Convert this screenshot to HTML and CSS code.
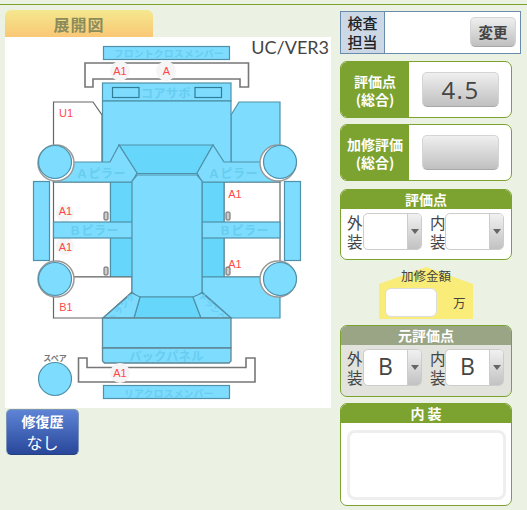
FILE: index.html
```html
<!DOCTYPE html>
<html lang="ja">
<head>
<meta charset="utf-8">
<title>展開図</title>
<link rel="stylesheet" href="styles.css">
</head>
<body>
<div class="page">
  <div class="left">
    <div class="tab">展開図</div>
    <div class="canvas">
      <svg class="diagram" width="326" height="371" viewBox="5 37 326 371" xmlns="http://www.w3.org/2000/svg">
        <!-- skirts -->
        <rect class="p" x="33.5" y="181.5" width="16" height="79"/>
        <rect class="p" x="284.5" y="181.5" width="16" height="79"/>
        <!-- front cross member -->
        <rect class="p" x="103.5" y="46.5" width="126" height="13"/>
        <text class="t ts" x="169" y="57">フロントクロスメンバー</text>
        <!-- front bumper -->
        <path class="b" d="M85 87V63H248.500V87H240V79H93V87Z"/>
        <circle class="halo" cx="120" cy="71" r="10"/>
        <circle class="halo" cx="166" cy="71" r="10"/>
        <!-- fenders -->
        <path class="w" d="M53.500 145V102H93L102 115V170H70Z"/>
        <path class="p" d="M231 115L239 102H280V170H231Z"/>
        <!-- hood and core support -->
        <rect class="p" x="102.500" y="83" width="128.500" height="18"/>
        <rect class="p" x="102.500" y="101" width="128.500" height="75"/>
        <rect class="d" x="112.500" y="87.500" width="26.500" height="10"/>
        <rect class="d" x="195" y="87.500" width="26.500" height="10"/>
        <text class="t" x="166" y="98">コアサポ</text>
        <!-- doors -->
        <rect class="w" x="53.500" y="182" width="57" height="95"/>
        <rect class="w" x="224" y="182" width="56" height="95"/>
        <rect class="q" x="110.500" y="182" width="22" height="95"/>
        <rect class="q" x="202" y="182" width="22" height="95"/>
        <rect class="h" x="104" y="212" width="4" height="8" rx="1"/>
        <rect class="h" x="104" y="267" width="4" height="8" rx="1"/>
        <rect class="h" x="226" y="212" width="4" height="8" rx="1"/>
        <rect class="h" x="226" y="267" width="4" height="8" rx="1"/>
        <circle class="halo" cx="65" cy="213" r="9"/>
        <circle class="halo" cx="65" cy="246" r="9"/>
        <!-- B pillars -->
        <rect class="p" x="53.500" y="222" width="79" height="16"/>
        <rect class="p" x="202" y="222" width="78" height="16"/>
        <text class="t" x="94" y="235">Ｂピラー</text>
        <text class="t" x="244" y="235">Ｂピラー</text>
        <!-- windshield -->
        <path class="q" d="M119 145H213L197 173.500H137Z"/>
        <!-- A pillars -->
        <path class="p" d="M53.500 182L72 162H110L119 145L137 173L132 182Z"/>
        <path class="p" d="M280 182L262 162H224L213 145L197 173L202 182Z"/>
        <text class="t" x="101" y="178">Ａピラー</text>
        <text class="t" x="233" y="178">Ａピラー</text>
        <!-- rear quarters -->
        <path class="w" d="M53.500 277H132V292L103 318H53.500Z"/>
        <path class="p" d="M202 277H280V318H231L202 292Z"/>
        <!-- roof -->
        <path class="p" d="M137 175H197L202 181V292L197 297H137L132 292V181Z"/>
        <!-- rear glass -->
        <path class="q" d="M140 297H193L201 318H134Z"/>
        <path class="p" d="M132 293L140 297L134 318H103Z"/>
        <path class="p" d="M202 293L193 297L201 318H231Z"/>
        <text class="t tv" transform="translate(124 309) rotate(-48)">トランク</text>
        <text class="t tv" transform="translate(210 309) rotate(48)">トランク</text>
        <!-- trunk and back panel -->
        <path class="o" d="M102.500 318H231V348H102.500Z"/>
        <path class="o" d="M102.500 348H231V361L229 363H104.500L102.500 361Z"/>
        <text class="t" x="166.500" y="361">バックパネル</text>
        <!-- rear bumper -->
        <path class="b" d="M78.500 358H87V367.500H246V358H255V382H78.500Z"/>
        <circle class="halo" cx="120" cy="373" r="10"/>
        <!-- rear cross member -->
        <rect class="p" x="103.500" y="385.500" width="126" height="13"/>
        <text class="t ts" x="169" y="397">リアクロスメンバー</text>
        <!-- wheels -->
        <circle class="ring" cx="56" cy="163" r="18"/>
        <circle class="ring" cx="278" cy="163" r="18"/>
        <circle class="ring" cx="56" cy="279" r="18"/>
        <circle class="ring" cx="278" cy="279" r="18"/>
        <circle class="p" cx="55" cy="162" r="16.500"/>
        <circle class="p" cx="280" cy="162" r="16.500"/>
        <circle class="p" cx="55" cy="279" r="16.500"/>
        <circle class="p" cx="280" cy="279" r="16.500"/>
        <circle class="p" cx="55" cy="379" r="16.500"/>
        <text class="spare" x="55" y="361">スペア</text>
        <!-- marks -->
        <text class="m" x="120" y="75">A1</text>
        <text class="m" x="166.500" y="75">A</text>
        <text class="m" x="66" y="117">U1</text>
        <text class="m" x="65.500" y="215">A1</text>
        <text class="m" x="65.500" y="251">A1</text>
        <text class="m" x="235" y="198">A1</text>
        <text class="m" x="235" y="268">A1</text>
        <text class="m" x="66" y="311">B1</text>
        <text class="m" x="120" y="377">A1</text>
      </svg>
      <div class="ver">UC/VER3</div>
    </div>
    <div class="repair">
      <span class="repair-t">修復歴</span>
      <span class="repair-v">なし</span>
    </div>
  </div>
  <div class="right">
    <div class="inspector">
      <div class="inspector-l">検査<br>担当</div>
      <div class="inspector-m"><div class="btn btn-s">変更</div></div>
    </div>
    <div class="score">
      <div class="score-l">評価点<br>(総合)</div>
      <div class="score-m"><div class="btn btn-l">4.5</div></div>
    </div>
    <div class="score score-2">
      <div class="score-l">加修評価<br>(総合)</div>
      <div class="score-m"><div class="btn btn-l"></div></div>
    </div>
    <div class="card c-grade">
      <div class="card-h">評価点</div>
      <div class="sel-row">
        <span class="sel-l">外<br>装</span>
        <div class="sel"><div class="sel-v"></div><div class="sel-a"><i></i></div></div>
        <span class="sel-l sel-l2">内<br>装</span>
        <div class="sel sel-2"><div class="sel-v"></div><div class="sel-a"><i></i></div></div>
      </div>
    </div>
    <div class="amount">
      <div class="amount-t">加修金額</div>
      <div class="amount-r"><div class="amount-i"></div><span class="amount-u">万</span></div>
    </div>
    <div class="card c-old">
      <div class="card-h card-h-o">元評価点</div>
      <div class="sel-row sel-row-o">
        <span class="sel-l">外<br>装</span>
        <div class="sel"><div class="sel-v">B</div><div class="sel-a"><i></i></div></div>
        <span class="sel-l sel-l2">内<br>装</span>
        <div class="sel sel-2"><div class="sel-v">B</div><div class="sel-a"><i></i></div></div>
      </div>
    </div>
    <div class="card c-int">
      <div class="card-h">内 装</div>
      <div class="int-b"><div class="ta"></div></div>
    </div>
  </div>
</div>
</body>
</html>
```

FILE: styles.css
```css
* { box-sizing: border-box; }
html, body { margin: 0; padding: 0; height: 510px; overflow: hidden; }
body {
  background: #ebf2e3;
  font-family: "Noto Sans CJK JP", "Noto Sans", sans-serif;
  color: #333;
}
.page {
  display: flex;
  align-items: flex-start;
  height: 510px;
  margin-top: 4px;
  border-top: 1.5px solid #7ca230;
}
.left { width: 335px; padding: 4.5px 0 0 5px; }
.tab {
  width: 148px;
  height: 27px;
  border-radius: 6px 6px 0 0;
  background: linear-gradient(#f4e88e, #fac775);
  text-align: center;
  font-size: 16px;
  font-weight: 700;
  line-height: 28px;
  letter-spacing: 1px;
  color: #8b8c5c;
}
.canvas { position: relative; width: 326px; height: 371px; background: #fff; }
.diagram { display: block; }
.ver {
  position: absolute;
  top: 0;
  right: 2px;
  font-family: Lato, sans-serif;
  font-size: 18px;
  line-height: 21px;
  color: #444;
}
.p { fill: #7edcff; stroke: #4f91a8; stroke-width: 1.2; }
.o { fill: #7edcff; stroke: #5f8796; stroke-width: 1.3; }
.q { fill: #66d6fa; stroke: #4f91a8; stroke-width: 1.2; }
.d { fill: #7edcff; stroke: #2f7d96; stroke-width: 1.2; }
.w { fill: #fff; stroke: #666; stroke-width: 1.2; }
.b { fill: #fff; stroke: #777; stroke-width: 1.6; }
.h { fill: #ccc; stroke: #666; stroke-width: 1; }
.ring { fill: #fff; stroke: #999; stroke-width: 1.5; }
.halo { fill: #f5f5f5; }
.t {
  fill: #68cdef;
  font-family: "Noto Sans CJK JP", sans-serif;
  font-size: 12px;
  font-weight: 700;
  text-anchor: middle;
  letter-spacing: 0.5px;
}
.ts { font-size: 9.5px; }
.tv { font-size: 8px; }
.spare {
  fill: #777;
  font-family: "Noto Sans CJK JP", sans-serif;
  font-size: 8px;
  font-weight: 700;
  text-anchor: middle;
}
.m {
  fill: #ff4848;
  font-family: "Liberation Sans", sans-serif;
  font-size: 11px;
  text-anchor: middle;
}
.repair {
  width: 73px;
  height: 46px;
  margin: 1px 0 0 1px;
  border-radius: 5px;
  background: linear-gradient(#5e84d6, #28479a);
  border: 1px solid #7f93b8;
  border-bottom-color: #23407f;
  color: #fff;
  text-align: center;
  display: flex;
  flex-direction: column;
  line-height: 19px;
  padding-top: 2px;
}
.repair-t { font-size: 14px; font-weight: 700; }
.repair-v { font-size: 16px; line-height: 22px; }
.right { width: 192px; padding: 6px 0 0 5px; }
.inspector {
  display: flex;
  width: 181px;
  height: 43px;
  border: 1px solid #6a8cac;
  background: #fff;
}
.inspector-l {
  width: 44px;
  background: #cdd8e6;
  border-right: 1px solid #6a8cac;
  font-size: 15px;
  font-weight: 500;
  line-height: 19px;
  text-align: center;
  padding-top: 1px;
  color: #222;
}
.inspector-m { flex: 1; display: flex; justify-content: flex-end; padding: 5px 4px 0 0; }
.btn {
  background: linear-gradient(#efefef, #c0c0c0);
  border: 1px solid #d4d4d4;
  border-bottom-color: #a8a8a8;
  border-radius: 5px;
  text-align: center;
}
.btn-s { width: 46px; height: 30px; font-size: 14.500px; font-weight: 700; line-height: 28px; color: #444; }
.btn-l { width: 77px; height: 35px; font-family: "Open Sans", sans-serif; font-size: 24px; line-height: 33px; color: #444; letter-spacing: 1.500px; }
.score {
  display: flex;
  width: 172px;
  height: 57px;
  margin-top: 7px;
  border: 1px solid #7ca230;
  border-radius: 7px;
  overflow: hidden;
  background: #fff;
}
.score-2 { margin-top: 6px; }
.score-l {
  width: 68px;
  background: #7ca230;
  color: #fff;
  text-align: center;
  font-size: 14px;
  font-weight: 700;
  line-height: 18px;
  padding-top: 10px;
}
.score-m { flex: 1; padding: 10px 0 0 13px; }
.card {
  width: 172px;
  border: 1px solid #7ca230;
  border-radius: 7px;
  overflow: hidden;
  background: #fff;
}
.c-grade { height: 71px; margin-top: 8px; }
.c-old { height: 72px; background: #e1e3dc; }
.c-int { height: 103px; margin-top: 6px; }
.card-h {
  height: 19px;
  background: #7ca230;
  color: #fff;
  text-align: center;
  font-size: 14px;
  font-weight: 700;
  line-height: 19px;
}
.card-h-o { background: #9aa585; }
.sel-row { display: flex; padding: 4px 0 0 6px; }
.sel-row-o { padding-top: 4px; }
.sel-l { width: 16px; font-size: 15.500px; line-height: 19px; padding-top: 0; color: #444; }
.sel-l2 { margin-left: 8px; }
.sel {
  display: flex;
  width: 59px;
  height: 37px;
  border-radius: 5px;
  overflow: hidden;
  border: 1px solid #ccc;
  background: #fff;
}
.sel-2 { margin-left: -1px; }
.sel-v { flex: 1; text-align: center; font-family: "Open Sans", sans-serif; font-size: 23px; line-height: 33px; color: #444; }
.sel-a {
  width: 14px;
  background: linear-gradient(#f1f1f1, #c2c2c2);
  border-left: 1px solid #ccc;
  display: flex;
  align-items: center;
  justify-content: center;
}
.sel-a i {
  display: block;
  width: 0;
  height: 0;
  border: 4px solid transparent;
  border-top: 5px solid #666;
  border-bottom: 0;
}
.amount {
  position: relative;
  width: 94px;
  height: 52px;
  margin: 7px 0 6px 39px;
}
.amount::before {
  content: "";
  position: absolute;
  inset: 0;
  background: #faec78;
  clip-path: polygon(0 17px, 47px 0, 100% 17px, 100% 100%, 0 100%);
}
.amount-t { position: relative; text-align: center; font-size: 12.500px; line-height: 18px; color: #444; }
.amount-r { position: relative; display: flex; align-items: center; padding: 3px 0 0 6px; }
.amount-i { width: 52px; height: 29px; background: #fff; border: 1px solid #ddd; border-radius: 6px; }
.amount-u { margin-left: 16px; font-size: 12.500px; color: #444; }
.int-b { background: #fff; padding: 7px 5px 0 6px; }
.ta { height: 70px; border: 3px solid #eee; border-radius: 8px; background: #fff; }
```
